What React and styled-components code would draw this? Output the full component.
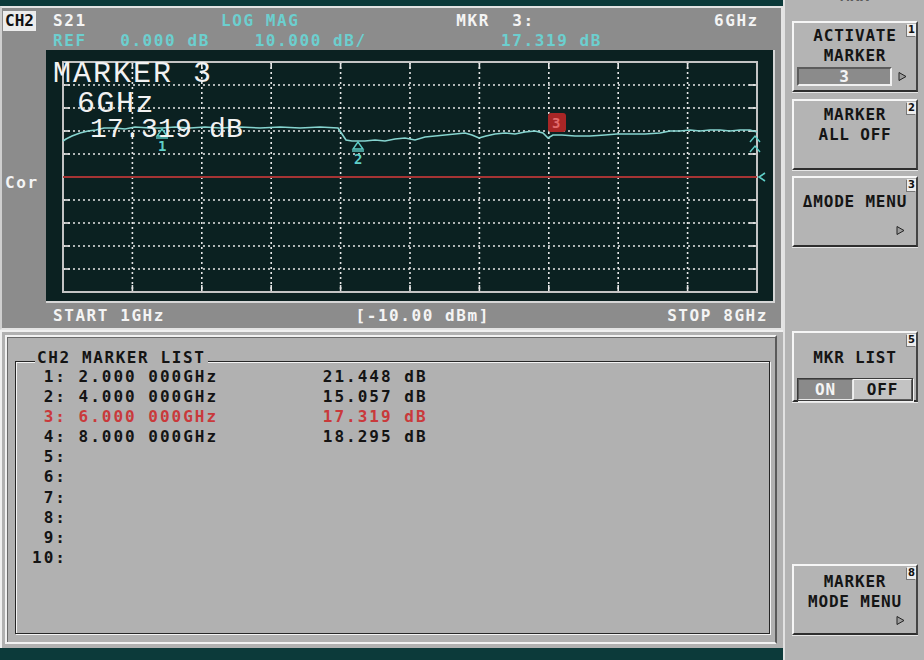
import React from "react";
import styled, { createGlobalStyle } from "styled-components";

const GlobalStyle = createGlobalStyle`
  html, body {
    margin: 0;
    padding: 0;
    background: #0c3a3a;
  }
  body {
    font-family: "DejaVu Sans Mono", monospace;
  }
`;

const Screen = styled.div`
  width: 924px;
  height: 660px;
  display: flex;
  overflow: hidden;
  background: #0c3a3a;
`;

/* ---------- left side: trace + marker list ---------- */

const LeftColumn = styled.div`
  width: 783px;
  display: flex;
  flex-direction: column;
  padding-top: 6px;
  box-sizing: border-box;
`;

const TracePanel = styled.section`
  height: 324px;
  box-sizing: border-box;
  background: #8c8c8c;
  border: 2px solid #e4e4e4;
  border-left-color: #cfcfcf;
  padding-top: 3px;
  display: flex;
  flex-direction: column;
  font: bold 16px "DejaVu Sans Mono", monospace;
  letter-spacing: 1.57px;
  color: #f4f4f4;
`;

const PanelRow = styled.div`
  display: flex;
  height: ${(p) => p.$h}px;
  line-height: 20px;
`;

const Gutter = styled.div`
  width: 44px;
  flex: none;
  padding-top: ${(p) => p.$top || 0}px;
  padding-left: 3px;
  box-sizing: border-box;
`;

const ChannelBadge = styled.span`
  display: inline-block;
  margin-left: -2px;
  padding: 0 2px;
  background: #ececec;
  color: #111;
  letter-spacing: 0;
  line-height: 20px;
`;

const Readout = styled.div`
  padding-left: 7px;
  white-space: pre;
`;

const Cyan = styled.span`
  color: #6ccfcf;
`;

const ChartBox = styled.div`
  position: relative;
  width: 729px;
  height: 253px;
  box-sizing: border-box;
  background: #0b2121;
  border-right: 2px solid #d6d6d6;
  border-bottom: 2px solid #d6d6d6;
`;

const MarkerReadout = styled.div`
  position: absolute;
  left: 7px;
  top: 9px;
  font: 30px "Liberation Mono", monospace;
  line-height: 30px;
  letter-spacing: 2px;
  color: #f2f2f2;
  white-space: pre;
`;

const ReadoutLine = styled.div`
  margin-left: ${(p) => p.$indent || 0}px;
  margin-top: ${(p) => p.$shift || 0}px;
  font-size: ${(p) => p.$size || 30}px;
  letter-spacing: ${(p) => p.$spacing ?? 2}px;
`;

const Footer = styled.div`
  flex: 1;
  display: flex;
  padding: 0 13px 0 51px;
  line-height: 25px;
  white-space: pre;
`;

const StopLabel = styled.span`
  margin-left: auto;
`;

const ListPanel = styled.section`
  height: 318px;
  box-sizing: border-box;
  background: #b1b1b1;
  border-top: 2px solid #f0f0f0;
  border-left: 2px solid #f0f0f0;
  padding: 3px 6px 4px 3px;
  display: flex;
`;

const ListFrame = styled.div`
  flex: 1;
  display: flex;
  border: 2px solid;
  border-color: #f2f2f2 #5a5a5a #f2f2f2 #f2f2f2;
  box-shadow: inset 1px 1px 0 #6a6a6a;
`;

const GroupBox = styled.div`
  position: relative;
  flex: 1;
  margin: 24px 5px 8px 8px;
  padding: 5px 0 0 16px;
  border: 1px solid #262626;
  box-shadow: inset 1px 1px 0 #f4f4f4, 1px 1px 0 #f4f4f4;
  font: bold 16px "DejaVu Sans Mono", monospace;
  letter-spacing: 2px;
  color: #141414;
`;

const GroupTitle = styled.div`
  position: absolute;
  top: -12.5px;
  left: 19px;
  padding: 0 2px;
  line-height: 16px;
  letter-spacing: 1.6px;
  background: #b1b1b1;
`;

const MarkerRow = styled.div`
  line-height: 20.1px;
  white-space: pre;
  color: ${(p) => (p.$active ? "#c9393b" : "#141414")};
`;

/* ---------- right side: softkey menu ---------- */

const SoftkeyColumn = styled.aside`
  width: 141px;
  box-sizing: border-box;
  background: #b4b4b4;
  border-left: 2px solid #e2e2e2;
  overflow: hidden;
  display: flex;
  flex-direction: column;
`;

const MenuTitle = styled.div`
  margin-top: -12px;
  height: 15px;
  text-align: center;
  font: bold 16px "DejaVu Sans Mono", monospace;
  line-height: 15px;
  color: #5a5a5a;
`;

const SoftkeyGrid = styled.div`
  display: grid;
  grid-template-rows: repeat(8, 71px);
  row-gap: 6.6px;
  padding: 18px 6px 0 7px;
`;

const Softkey = styled.div`
  grid-row: ${(p) => p.$slot};
  position: relative;
  box-sizing: border-box;
  border: 2px solid;
  border-color: #f6f6f6 #444 #2e2e2e #f6f6f6;
  box-shadow: 0 1px 0 #e6e6e6;
  display: flex;
  flex-direction: column;
  align-items: center;
  padding-top: ${(p) => p.$pad}px;
  font: bold 16px "DejaVu Sans Mono", monospace;
  letter-spacing: 0.8px;
  line-height: 20px;
  color: #151515;
`;

const KeyLine = styled.div`
  white-space: pre;
`;

const KeyNumber = styled.span`
  position: absolute;
  top: 1px;
  right: 0;
  padding: 0 1px;
  font: bold 10px "DejaVu Sans", sans-serif;
  line-height: 12px;
  letter-spacing: 0;
  background: #ededed;
  color: #111;
  box-shadow: -1px 1px 0 #777;
`;

const FieldRow = styled.div`
  align-self: stretch;
  display: flex;
  align-items: center;
  margin: 1px 0 0 3px;
`;

const ValueField = styled.div`
  width: 95px;
  height: 19px;
  box-sizing: border-box;
  border: 2px solid;
  border-color: #5c5c5c #f0f0f0 #f0f0f0 #5c5c5c;
  background: #8b8b8b;
  color: #f4f4f4;
  text-align: center;
  line-height: 15px;
`;

const ArrowMark = styled.svg`
  flex: none;
  margin-left: ${(p) => p.$left || 0}px;
  margin-top: ${(p) => p.$top || 0}px;
  align-self: ${(p) => (p.$end ? "flex-end" : "auto")};
  margin-right: ${(p) => (p.$end ? 11 : 0)}px;
`;

const Toggle = styled.div`
  align-self: stretch;
  display: flex;
  height: 21px;
  margin: 10px 3px 0 3px;
  border: 1px solid #3a3a3a;
  box-shadow: 1px 1px 0 #f0f0f0;
`;

const ToggleHalf = styled.div`
  flex: ${(p) => (p.$on ? "0 0 55px" : "1")};
  box-sizing: border-box;
  text-align: center;
  line-height: 19px;
  background: ${(p) => (p.$on ? "#8a8a8a" : "#c3c3c3")};
  color: ${(p) => (p.$on ? "#f4f4f4" : "#151515")};
  border: 1px solid;
  border-color: ${(p) =>
    p.$on ? "#5c5c5c #e8e8e8 #e8e8e8 #5c5c5c" : "#f0f0f0 #5c5c5c #5c5c5c #f0f0f0"};
`;

/* ---------- trace data ---------- */

const GRID = { left: 63, top: 62, width: 694, height: 230, cols: 10, rows: 10 };

const TRACE = [
  [63, 141], [66, 139], [72, 136], [80, 133], [88, 131], [96, 130], [104, 128],
  [115, 128], [125, 129], [135, 127], [150, 128], [162, 128], [175, 127],
  [190, 128], [205, 127], [220, 128], [240, 127], [260, 128], [280, 127],
  [300, 128], [320, 127], [338, 128], [342, 134], [346, 140], [352, 141],
  [365, 141], [375, 140], [385, 141], [395, 139], [405, 138], [415, 140],
  [425, 137], [435, 136], [445, 135], [455, 134], [465, 133], [472, 135],
  [479, 138], [486, 136], [495, 134], [505, 133], [515, 134], [525, 132],
  [535, 131], [543, 133], [548, 138], [553, 135], [562, 135], [575, 136],
  [590, 136], [605, 135], [617, 134], [630, 134], [645, 134], [660, 133],
  [670, 131], [680, 131], [690, 130], [700, 131], [710, 130], [720, 130],
  [730, 131], [740, 130], [750, 130], [757, 132],
];

const MARKERS = [
  { n: 1, x: 162, y: 128 },
  { n: 2, x: 358, y: 141 },
];

const LIST = [
  { n: " 1:", freq: "2.000 000GHz", val: "21.448 dB" },
  { n: " 2:", freq: "4.000 000GHz", val: "15.057 dB" },
  { n: " 3:", freq: "6.000 000GHz", val: "17.319 dB", active: true },
  { n: " 4:", freq: "8.000 000GHz", val: "18.295 dB" },
  { n: " 5:" },
  { n: " 6:" },
  { n: " 7:" },
  { n: " 8:" },
  { n: " 9:" },
  { n: "10:" },
];

const TraceChart = () => {
  const { left, top, width, height, cols, rows } = GRID;
  const right = left + width;
  const bottom = top + height;
  const colStep = width / cols;
  const rowStep = height / rows;
  const vLines = Array.from({ length: cols - 1 }, (_, i) => left + (i + 1) * colStep);
  const hLines = Array.from({ length: rows - 1 }, (_, i) => top + (i + 1) * rowStep);
  const refY = top + 5 * rowStep;

  return (
    <svg width="727" height="251" viewBox="46 50 727 251" style={{ display: "block" }}>
      <g stroke="#e6e6e6" strokeWidth="1.6" strokeDasharray="2 3">
        {vLines.map((x) => (
          <line key={`v${x}`} x1={x} y1={top} x2={x} y2={bottom} />
        ))}
        {hLines.map((y) => (
          <line key={`h${y}`} x1={left} y1={y} x2={right} y2={y} />
        ))}
      </g>
      <g stroke="#e6e6e6" strokeWidth="1.6">
        {vLines.map((x) => (
          <g key={`t${x}`}>
            <line x1={x} y1={top} x2={x} y2={top + 7} />
            <line x1={x} y1={bottom - 7} x2={x} y2={bottom} />
          </g>
        ))}
        {hLines.map((y) => (
          <g key={`s${y}`}>
            <line x1={left} y1={y} x2={left + 7} y2={y} />
            <line x1={right - 8} y1={y} x2={right} y2={y} />
          </g>
        ))}
      </g>
      <rect x={left} y={top} width={width} height={height} fill="none" stroke="#c4c4c4" strokeWidth="2" />
      <line x1={left} y1={refY} x2={right} y2={refY} stroke="#a63434" strokeWidth="2" />
      <polyline points={`${right + 8},${refY - 4} ${right + 2},${refY} ${right + 8},${refY + 4}`} fill="none" stroke="#5fcfc8" strokeWidth="1.6" />

      <polyline points={TRACE.map((p) => p.join(",")).join(" ")} fill="none" stroke="#86d4cf" strokeWidth="1.6" />

      <g fill="none" stroke="#5fcfc8" strokeWidth="1.4">
        {MARKERS.map((m) => (
          <g key={m.n}>
            <polygon points={`${m.x},${m.y + 1} ${m.x - 5},${m.y + 8} ${m.x + 5},${m.y + 8}`} />
            <line x1={m.x - 6} y1={m.y + 10} x2={m.x + 6} y2={m.y + 10} />
          </g>
        ))}
        <polyline points="750,142 755,136 760,142" />
        <polyline points="750,152 755,146 760,152" />
      </g>
      <g fill="#5fcfc8" fontFamily="DejaVu Sans Mono, monospace" fontWeight="bold" fontSize="14">
        {MARKERS.map((m) => (
          <text key={m.n} x={m.x - 4} y={m.y + 23}>
            {m.n}
          </text>
        ))}
      </g>
      <rect x="548" y="113" width="18" height="19" rx="3" fill="#a82626" />
      <text x="552" y="128" fill="#e26a6a" fontFamily="DejaVu Sans Mono, monospace" fontWeight="bold" fontSize="14">
        3
      </text>
    </svg>
  );
};

const Arrow = (props) => (
  <ArrowMark width="9" height="9" viewBox="0 0 9 9" {...props}>
    <polygon points="1,0.5 8,4.5 1,8.5" fill="#9c9c9c" stroke="#222" strokeWidth="1" />
  </ArrowMark>
);

const App = () => {
  return (
    <>
      <GlobalStyle />
      <Screen>
        <LeftColumn>
          <TracePanel>
            <PanelRow $h={20}>
              <Gutter>
                <ChannelBadge>CH2</ChannelBadge>
              </Gutter>
              <Readout>
                {"S21            "}
                <Cyan>LOG MAG</Cyan>
                {"              MKR  3:                6GHz"}
              </Readout>
            </PanelRow>
            <PanelRow $h={19}>
              <Gutter />
              <Readout>
                <Cyan>{"REF   0.000 dB    10.000 dB/            17.319 dB"}</Cyan>
              </Readout>
            </PanelRow>
            <PanelRow $h={253}>
              <Gutter $top={123}>Cor</Gutter>
              <ChartBox>
                <TraceChart />
                <MarkerReadout>
                  <ReadoutLine>MARKER 3</ReadoutLine>
                  <ReadoutLine $indent={24} $spacing={1.5}>6GHz</ReadoutLine>
                  <ReadoutLine $indent={37} $shift={-4} $size={28} $spacing={0.2}>
                    17.319 dB
                  </ReadoutLine>
                </MarkerReadout>
              </ChartBox>
            </PanelRow>
            <Footer>
              <span>{"START 1GHz                 [-10.00 dBm]"}</span>
              <StopLabel>STOP 8GHz</StopLabel>
            </Footer>
          </TracePanel>

          <ListPanel>
            <ListFrame>
              <GroupBox>
                <GroupTitle>CH2 MARKER LIST</GroupTitle>
                {LIST.map((row) => (
                  <MarkerRow key={row.n} $active={row.active}>
                    {row.freq ? `${row.n} ${row.freq}         ${row.val}` : row.n}
                  </MarkerRow>
                ))}
              </GroupBox>
            </ListFrame>
          </ListPanel>
        </LeftColumn>

        <SoftkeyColumn>
          <MenuTitle>MKR</MenuTitle>
          <SoftkeyGrid>
            <Softkey $slot={1} $pad={3}>
              <KeyNumber>1</KeyNumber>
              <KeyLine>ACTIVATE</KeyLine>
              <KeyLine>MARKER</KeyLine>
              <FieldRow>
                <ValueField>3</ValueField>
                <Arrow $left={6} />
              </FieldRow>
            </Softkey>
            <Softkey $slot={2} $pad={4}>
              <KeyNumber>2</KeyNumber>
              <KeyLine>MARKER</KeyLine>
              <KeyLine>ALL OFF</KeyLine>
            </Softkey>
            <Softkey $slot={3} $pad={14}>
              <KeyNumber>3</KeyNumber>
              <KeyLine>ΔMODE MENU</KeyLine>
              <Arrow $end $top={14} />
            </Softkey>
            <Softkey $slot={5} $pad={15}>
              <KeyNumber>5</KeyNumber>
              <KeyLine>MKR LIST</KeyLine>
              <Toggle>
                <ToggleHalf $on>ON</ToggleHalf>
                <ToggleHalf>OFF</ToggleHalf>
              </Toggle>
            </Softkey>
            <Softkey $slot={8} $pad={6}>
              <KeyNumber>8</KeyNumber>
              <KeyLine>MARKER</KeyLine>
              <KeyLine>MODE MENU</KeyLine>
              <Arrow $end $top={4} />
            </Softkey>
          </SoftkeyGrid>
        </SoftkeyColumn>
      </Screen>
    </>
  );
};

export default App;
